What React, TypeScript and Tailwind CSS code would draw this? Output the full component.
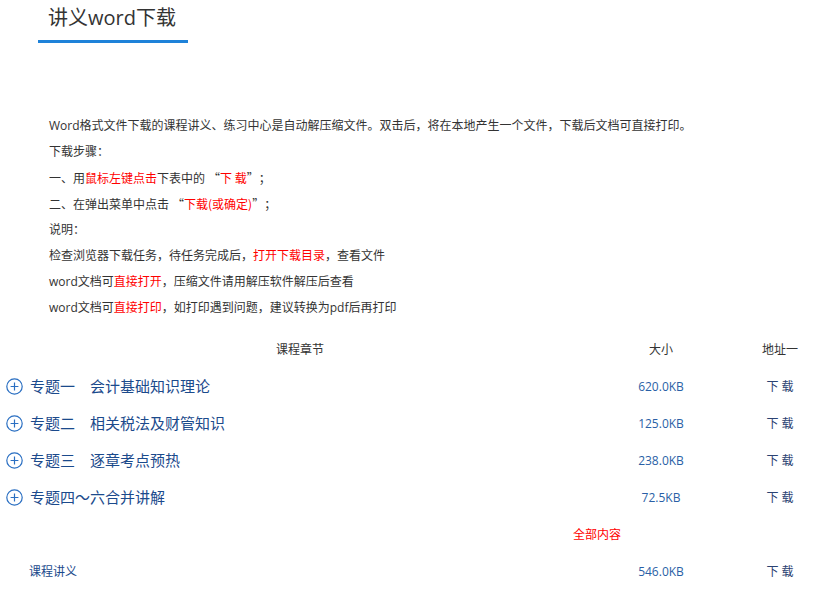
import React from 'react';

const FONT = { fontFamily: '"Open Sans", "Noto Sans CJK SC", sans-serif' };
const CJK = { fontFamily: '"Noto Sans CJK SC", sans-serif' };

const PlusCircle: React.FC = () => (
  <svg width="17" height="17" viewBox="0 0 17 17" fill="none" stroke="#2a6fc2" strokeWidth="1.2">
    <circle cx="8.5" cy="8.5" r="7.7" />
    <path d="M8.5 4.6v7.8M4.6 8.5h7.8" />
  </svg>
);

const chapters = [
  { title: '专题一　会计基础知识理论', size: '620.0KB' },
  { title: '专题二　相关税法及财管知识', size: '125.0KB' },
  { title: '专题三　逐章考点预热', size: '238.0KB' },
  { title: '专题四～六合并讲解', size: '72.5KB' },
];

const Red: React.FC<{ children: React.ReactNode }> = ({ children }) => (
  <span className="text-[#ff0000]">{children}</span>
);

const App: React.FC = () => {
  return (
    <div className="w-[831px] h-[590px] overflow-hidden bg-white text-[#333]" style={FONT}>
      {/* title */}
      <div className="ml-[38px] w-[150px] h-[43px] border-b-[3px] border-[#1e82d9] pl-[10px] pt-[4px]">
        <h2 className="text-[20px] leading-[28px] text-[#333] whitespace-nowrap">讲义word下载</h2>
      </div>

      {/* notes */}
      <div className="mt-[70px] pl-[49px] text-[12px] leading-[26px] whitespace-nowrap">
        <p>Word格式文件下载的课程讲义、练习中心是自动解压缩文件。双击后，将在本地产生一个文件，下载后文档可直接打印。</p>
        <p>下载步骤：</p>
        <p style={CJK}>一、用<Red>鼠标左键点击</Red>下表中的<span className="pl-[3px]">“</span><Red>下 载</Red>”<span className="pl-[6px]">；</span></p>
        <p style={CJK}>二、在弹出菜单中点击<span className="pl-[3px]">“</span><Red>下载(或确定)</Red>”<span className="pl-[6px]">；</span></p>
        <p>说明：</p>
        <p>检查浏览器下载任务，待任务完成后，<Red>打开下载目录</Red>，查看文件</p>
        <p>word文档可<Red>直接打开</Red>，压缩文件请用解压软件解压后查看</p>
        <p>word文档可<Red>直接打印</Red>，如打印遇到问题，建议转换为pdf后再打印</p>
      </div>

      {/* table */}
      <div className="mt-[10px]">
        <div className="grid grid-cols-[600px_122px_109px] h-[37px] items-center text-[12px] text-[#333]">
          <div className="text-center">课程章节</div>
          <div className="text-center">大小</div>
          <div className="text-center pl-[7px]">地址一</div>
        </div>

        {chapters.map((c) => (
          <div key={c.title} className="grid grid-cols-[600px_122px_109px] h-[37px] items-center">
            <div className="flex items-center gap-[7px] pl-[6px] text-[15px] text-[#1b4a8c] whitespace-nowrap">
              <PlusCircle />
              <span>{c.title}</span>
            </div>
            <div className="text-center text-[12px] text-[#2a5fa6]">{c.size}</div>
            <div className="text-center pl-[7px] text-[12px] text-[#2b4272]">下 载</div>
          </div>
        ))}

        <div className="h-[37px] flex items-center pl-[573px] text-[12px] text-[#ff0000]">全部内容</div>

        <div className="grid grid-cols-[600px_122px_109px] h-[37px] items-center text-[12px]">
          <div className="pl-[29px] text-[#1b4a8c]">课程讲义</div>
          <div className="text-center text-[#2a5fa6]">546.0KB</div>
          <div className="text-center pl-[7px] text-[#2b4272]">下 载</div>
        </div>
      </div>
    </div>
  );
};

export default App;
